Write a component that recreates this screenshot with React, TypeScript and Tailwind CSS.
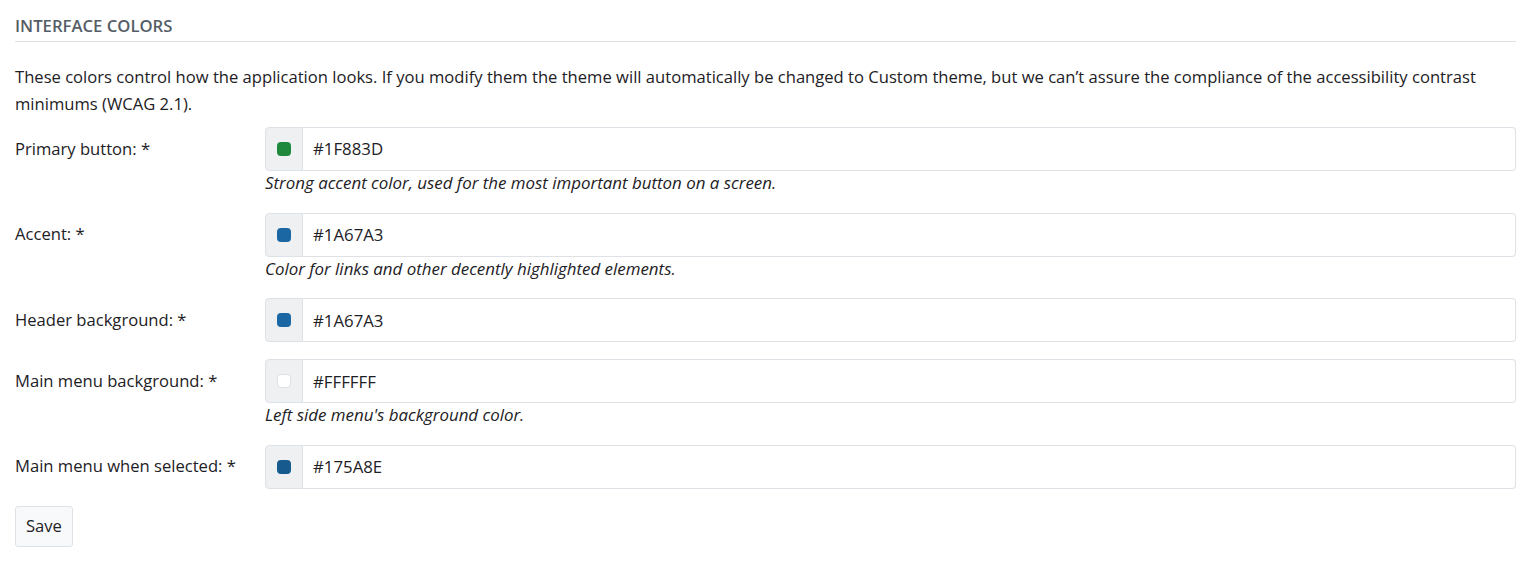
const rows = [
  { label: "Primary button: *", value: "#1F883D", swatch: "bg-[#1f883d]", help: "Strong accent color, used for the most important button on a screen." },
  { label: "Accent: *", value: "#1A67A3", swatch: "bg-[#1a67a3]", help: "Color for links and other decently highlighted elements." },
  { label: "Header background: *", value: "#1A67A3", swatch: "bg-[#1a67a3]", help: "" },
  { label: "Main menu background: *", value: "#FFFFFF", swatch: "bg-white border border-[#dee2e6]", help: "Left side menu's background color." },
  { label: "Main menu when selected: *", value: "#175A8E", swatch: "bg-[#175a8e]", help: "" },
];

export default function App() {
  return (
    <div className="bg-white px-[15px] pt-[13px] font-['Open_Sans',sans-serif] text-[16.6px] text-[#1d2125]">
      <h3 className="border-b border-[#dee2e6] pb-[3px] text-[16.7px] font-semibold uppercase text-[#555d66]">
        Interface colors
      </h3>
      <p className="mt-[21px] mb-[10px] leading-[27px]">
        These colors control how the application looks. If you modify them the theme will automatically be changed to Custom theme, but we can’t assure the compliance of the accessibility contrast minimums (WCAG 2.1).
      </p>
      <form onSubmit={(e) => e.preventDefault()}>
        {rows.map((row) => (
          <div key={row.label} className="mb-[17px] flex">
            <label className="flex h-[44px] w-[250px] shrink-0 items-center">{row.label}</label>
            <div className="flex-1">
              <div className="flex h-[44px]">
                <span className="flex w-[38px] items-center justify-center rounded-l-[4px] border border-[#dee2e6] bg-[#eef0f2]">
                  <span className={`h-[14px] w-[14px] rounded-[4px] ${row.swatch}`} />
                </span>
                <input
                  defaultValue={row.value}
                  className="flex-1 rounded-r-[4px] border border-l-0 border-[#dee2e6] px-[10px] text-[16.8px] text-[#1d2125] outline-none"
                />
              </div>
              {row.help ? <div className="text-[16.9px] leading-[24.6px] italic">{row.help}</div> : null}
            </div>
          </div>
        ))}
        <button type="submit" className="h-[41px] rounded-[3px] border border-[#dee2e6] bg-[#f8f9fa] px-[10px] text-[#1d2125]">
          Save
        </button>
      </form>
    </div>
  );
}
